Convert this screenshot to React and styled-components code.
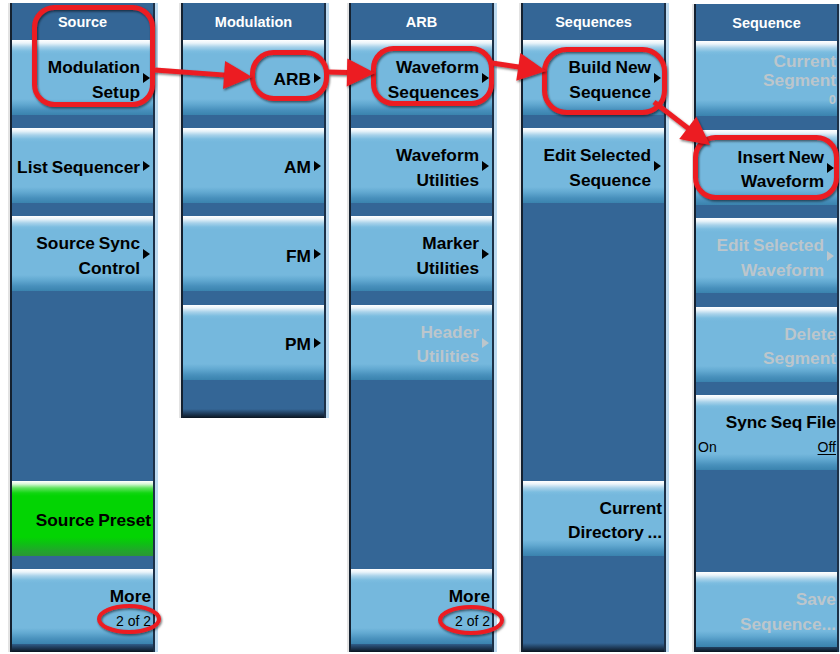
import styled, { createGlobalStyle } from 'styled-components';

const GlobalStyle = createGlobalStyle`
  body {
    margin: 0;
    background: #fff;
    font-family: 'Liberation Sans', Arial, sans-serif;
  }
`;

const blueKey = `linear-gradient(to bottom,
  #ffffff 0px, #eaf4fa 3px, #a8d2ea 7px, #7cbde0 11px, #75b8dd 14px,
  #75b8dd 59px, #62a9d1 64px, #4890bc 70px, #3a83ae 75px)`;

const greenKey = `linear-gradient(to bottom,
  #ffffff 0px, #d8f7d8 3px, #5fe35f 7px, #10d610 12px, #03d403 15px,
  #03d403 56px, #0cc212 62px, #22a52c 70px, #2a9834 75px)`;

const red = '#ec1b22';

const Page = styled.div`
  position: relative;
  width: 840px;
  height: 654px;
  padding: 3px 0 0 10px;
  box-sizing: border-box;
  display: flex;
  align-items: flex-start;
  overflow: hidden;
`;

const Panel = styled.section`
  flex: none;
  width: 145px;
  height: ${p => p.$h}px;
  margin-left: ${p => p.$ml}px;
  margin-top: ${p => p.$mt || 0}px;
  box-sizing: border-box;
  display: flex;
  flex-direction: column;
  border-left: 2px solid #142130;
  border-right: 2px solid #1c3047;
  background: linear-gradient(to top, #0b1520 0, #1d3855 4px, #346696 9px);
  box-shadow: 3px 0 0 #bddaf0, -2px 0 0 #e3e3e3;
`;

const Header = styled.div`
  flex: none;
  height: 37px;
  display: flex;
  align-items: center;
  justify-content: center;
  color: #fff;
  font-size: 14.5px;
  font-weight: bold;
`;

const Stack = styled.div`
  display: flex;
  flex-direction: column;
  gap: ${p => p.$gap || 13.2}px;
`;

const Slot = styled.div`
  flex: none;
  height: 75px;
`;

const Key = styled.div`
  flex: none;
  height: 75px;
  box-sizing: border-box;
  display: flex;
  align-items: center;
  justify-content: flex-end;
  padding: 4px ${p => (p.$flush ? 1 : 2)}px 0 2px;
  overflow: hidden;
  color: ${p => (p.$off ? '#bcc6cc' : '#000')};
  background: ${p => (p.$green ? greenKey : blueKey)};
`;

const Label = styled.div`
  text-align: right;
  white-space: nowrap;
  font-size: 17.3px;
  font-weight: bold;
  word-spacing: -1px;
  line-height: ${p => (p.$tight ? 19 : 24.5)}px;
`;

const Small = styled.div`
  font-size: ${p => (p.$size || 14)}px;
  font-weight: ${p => (p.$bold ? 'bold' : 'normal')};
  word-spacing: 0;
`;

const Arrow = styled.span`
  flex: none;
  width: 0;
  height: 0;
  margin: -3px 1px 0 3px;
  border-left: 7px solid currentColor;
  border-top: 5px solid transparent;
  border-bottom: 5px solid transparent;
`;

const SyncBlock = styled.div`
  width: 100%;
`;

const Toggle = styled.div`
  display: flex;
  justify-content: space-between;
  font-size: 14px;
  line-height: 24px;
  u {
    text-decoration-thickness: 1px;
    text-underline-offset: 2px;
  }
`;

const Overlay = styled.svg`
  position: absolute;
  left: 0;
  top: 0;
  pointer-events: none;
`;

const arrow = (sx, sy, tx, ty, len = 28, half = 14) => {
  const dx = tx - sx;
  const dy = ty - sy;
  const d = Math.hypot(dx, dy);
  const ux = dx / d;
  const uy = dy / d;
  const bx = tx - ux * len;
  const by = ty - uy * len;
  return {
    line: [sx, sy, bx + ux * 2, by + uy * 2],
    head: `${tx},${ty} ${bx - uy * half},${by + ux * half} ${bx + uy * half},${by - ux * half}`,
  };
};

const rings = [
  { x: 34.5, y: 7.5, w: 118, h: 97, r: 20 },
  { x: 252.5, y: 52.5, w: 74, h: 46, r: 21 },
  { x: 373.5, y: 48.5, w: 118, h: 55, r: 20 },
  { x: 544.5, y: 49.5, w: 120, h: 63, r: 22 },
  { x: 695.5, y: 137.5, w: 141, h: 60, r: 20 },
];

const arrows = [
  arrow(155, 70, 252, 77),
  arrow(328, 72, 375, 73),
  arrow(492, 63, 546, 71),
  arrow(654, 102, 710, 145),
];

const Marks = () => (
  <Overlay width="840" height="654" viewBox="0 0 840 654">
    <defs>
      <filter id="shade" x="-20%" y="-20%" width="140%" height="140%">
        <feDropShadow dx="1" dy="1.5" stdDeviation="1.2" floodColor="#000" floodOpacity="0.55" />
      </filter>
    </defs>
    <g filter="url(#shade)" fill="none" stroke={red} strokeWidth="5">
      {rings.map((r, i) => (
        <rect key={i} x={r.x} y={r.y} width={r.w} height={r.h} rx={r.r} />
      ))}
      <ellipse cx="129" cy="619" rx="30" ry="13" strokeWidth="4" />
      <ellipse cx="471" cy="620" rx="31" ry="13" strokeWidth="4" />
      {arrows.map((a, i) => (
        <line key={i} x1={a.line[0]} y1={a.line[1]} x2={a.line[2]} y2={a.line[3]} />
      ))}
    </g>
    <g filter="url(#shade)" fill={red}>
      {arrows.map((a, i) => (
        <polygon key={i} points={a.head} />
      ))}
    </g>
  </Overlay>
);

const Btn = ({ lines, more, off, green, tight, flush }) => (
  <Key $off={off} $green={green} $flush={flush}>
    <Label $tight={tight}>
      {lines.map(l => (
        <div key={l}>{l}</div>
      ))}
      {tight && <Small $size={13} $bold>0</Small>}
    </Label>
    {more && <Arrow />}
  </Key>
);

const MoreKey = () => (
  <Key>
    <Label>
      <div>More</div>
      <Small>2 of 2</Small>
    </Label>
  </Key>
);

export default function App() {
  return (
    <>
      <GlobalStyle />
      <Page>
        <Panel $h={649} $ml={0}>
          <Header>Source</Header>
          <Stack>
            <Btn lines={['Modulation', 'Setup']} more />
            <Btn lines={['List Sequencer']} more />
            <Btn lines={['Source Sync', 'Control']} more />
            <Slot />
            <Slot />
            <Btn lines={['Source Preset']} green />
            <MoreKey />
          </Stack>
        </Panel>

        <Panel $h={415} $ml={26}>
          <Header>Modulation</Header>
          <Stack>
            <Btn lines={['ARB']} more />
            <Btn lines={['AM']} more />
            <Btn lines={['FM']} more />
            <Btn lines={['PM']} more />
          </Stack>
        </Panel>

        <Panel $h={649} $ml={23}>
          <Header>ARB</Header>
          <Stack>
            <Btn lines={['Waveform', 'Sequences']} more />
            <Btn lines={['Waveform', 'Utilities']} more />
            <Btn lines={['Marker', 'Utilities']} more />
            <Btn lines={['Header', 'Utilities']} more off />
            <Slot />
            <Slot />
            <MoreKey />
          </Stack>
        </Panel>

        <Panel $h={649} $ml={27}>
          <Header>Sequences</Header>
          <Stack>
            <Btn lines={['Build New', 'Sequence']} more />
            <Btn lines={['Edit Selected', 'Sequence']} more />
            <Slot />
            <Slot />
            <Slot />
            <Btn lines={['Current', 'Directory ...']} />
            <Slot />
          </Stack>
        </Panel>

        <Panel $h={648} $ml={28} $mt={1}>
          <Header>Sequence</Header>
          <Stack $gap={13.5}>
            <Btn lines={['Current', 'Segment']} off tight flush />
            <Btn lines={['Insert New', 'Waveform']} more />
            <Btn lines={['Edit Selected', 'Waveform']} more off />
            <Btn lines={['Delete', 'Segment']} off flush />
            <Key $flush>
              <SyncBlock>
                <Label>Sync Seq File</Label>
                <Toggle>
                  <span>On</span>
                  <u>Off</u>
                </Toggle>
              </SyncBlock>
            </Key>
            <Slot />
            <Btn lines={['Save', 'Sequence...']} off flush />
          </Stack>
        </Panel>

        <Marks />
      </Page>
    </>
  );
}
